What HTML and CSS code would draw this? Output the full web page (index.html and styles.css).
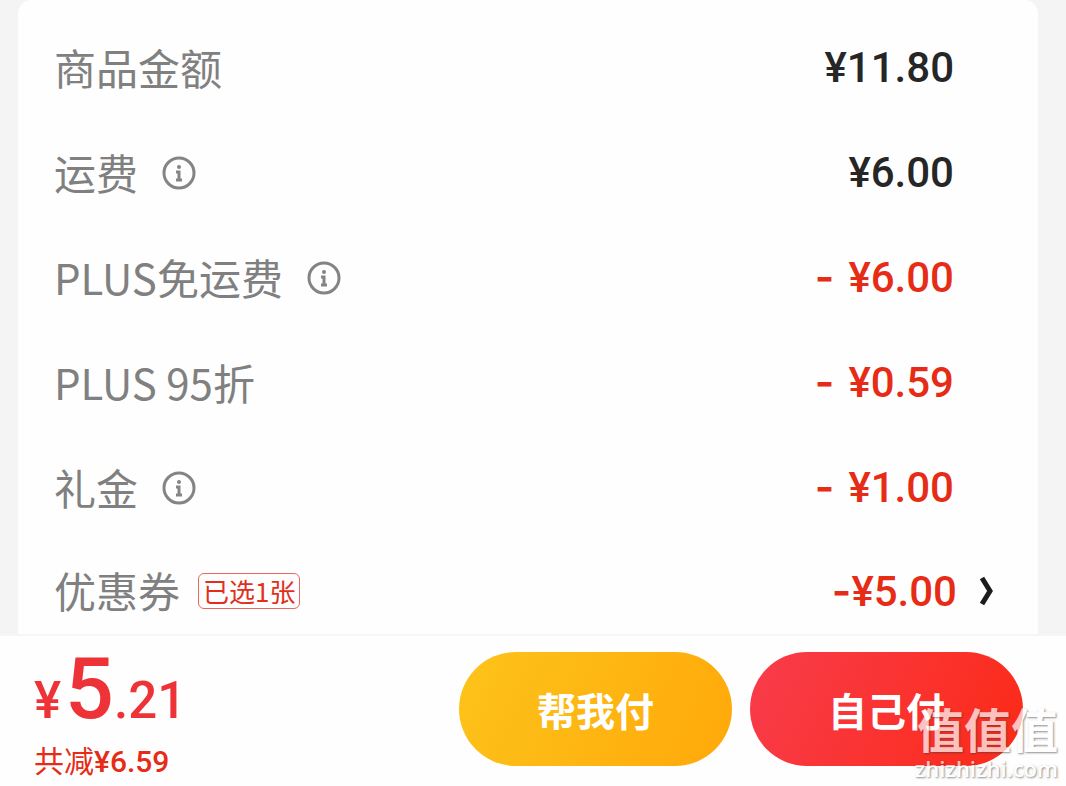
FILE: index.html
```html
<!DOCTYPE html>
<html lang="zh-CN">
<head>
  <meta charset="UTF-8">
  <meta name="viewport" content="width=device-width, initial-scale=1.0">
  <title>确认订单</title>
  <link rel="stylesheet" href="styles.css">
</head>
<body>

<!-- Price details -->
<main class="card">
  <div class="row">
    <span class="label">商品金额</span>
    <span class="amount">¥11.80</span>
  </div>
  <div class="row">
    <span class="label">运费</span>
    <button class="info" aria-label="运费说明">
      <svg viewBox="0 0 34 34"><circle cx="17" cy="17" r="15"/><circle class="dot" cx="17" cy="11" r="2"/><path d="M14 16h3v8M14 24h6"/></svg>
    </button>
    <span class="amount">¥6.00</span>
  </div>
  <div class="row">
    <span class="label">PLUS免运费</span>
    <button class="info" aria-label="PLUS免运费说明">
      <svg viewBox="0 0 34 34"><circle cx="17" cy="17" r="15"/><circle class="dot" cx="17" cy="11" r="2"/><path d="M14 16h3v8M14 24h6"/></svg>
    </button>
    <span class="amount minus"><span class="sign spaced">-</span>¥6.00</span>
  </div>
  <div class="row">
    <span class="label">PLUS 95折</span>
    <span class="amount minus"><span class="sign spaced">-</span>¥0.59</span>
  </div>
  <div class="row">
    <span class="label">礼金</span>
    <button class="info" aria-label="礼金说明">
      <svg viewBox="0 0 34 34"><circle cx="17" cy="17" r="15"/><circle class="dot" cx="17" cy="11" r="2"/><path d="M14 16h3v8M14 24h6"/></svg>
    </button>
    <span class="amount minus"><span class="sign spaced">-</span>¥1.00</span>
  </div>
  <div class="row coupon">
    <span class="label">优惠券</span>
    <span class="tag">已选1张</span>
    <span class="amount minus"><span class="sign">-</span>¥5.00</span>
    <button class="more" aria-label="选择优惠券">
      <svg viewBox="0 0 16 32"><path d="M4 3l8 13-8 13"/></svg>
    </button>
  </div>
</main>

<!-- Bottom pay bar -->
<footer class="pay-bar">
  <div class="total">
    <div class="price"><span class="yen">¥</span><span class="big">5</span>.21</div>
    <div class="saved">共减<span class="saved-num">¥6.59</span></div>
  </div>
  <button class="pay help">帮我付</button>
  <button class="pay self">自己付</button>
  <div class="watermark">
    <span class="mark-name">值值值</span>
    <span class="mark-site">zhizhizhi.com</span>
  </div>
</footer>

</body>
</html>
```

FILE: styles.css
```css
* {
  box-sizing: border-box;
}

body {
  margin: 0;
  background-color: #f4f4f4;
  font-family: "Noto Sans CJK SC", sans-serif;
}

button {
  border: none;
  padding: 0;
  background: none;
  font-family: inherit;
  cursor: pointer;
}

/* Price card */
.card {
  margin: 0 28px 0 18px;
  padding: 15px 84px 0 36px;
  background-color: #fefefe;
  border-radius: 14px 14px 0 0;
}

.row {
  display: flex;
  align-items: center;
  height: 105px;
}

.label {
  font-size: 42px;
  line-height: 56px;
  padding-bottom: 2px;
  color: #808080;
}

.amount {
  margin-left: auto;
  font-family: Roboto, "Noto Sans CJK SC", sans-serif;
  font-size: 42px;
  font-weight: 500;
  line-height: 50px;
  color: #262626;
}

.minus {
  color: #e62c16;
}

.sign {
  font-family: Inter, sans-serif;
  font-weight: 600;
}

.spaced {
  margin-right: 14px;
}

.info {
  width: 34px;
  height: 34px;
  margin-left: 24px;
}

.info svg {
  display: block;
  fill: none;
  stroke: #848484;
  stroke-width: 3;
}

.info .dot {
  fill: #848484;
  stroke: none;
}

/* Coupon row has an arrow past the amounts */
.coupon {
  height: 94px;
  margin-right: -40px;
  padding-top: 8px;
}

.tag {
  margin-left: 18px;
  padding: 0 4px;
  border: 1px solid #e8685c;
  border-radius: 6px;
  font-size: 26px;
  line-height: 34px;
  color: #e0301c;
}

.more {
  width: 16px;
  height: 32px;
  margin-left: 21px;
}

.more svg {
  display: block;
  fill: none;
  stroke: #1c1c1c;
  stroke-width: 5;
}

/* Pay bar */
.pay-bar {
  position: relative;
  display: flex;
  align-items: center;
  gap: 18px;
  height: 152px;
  padding: 0 43px 4px 34px;
  background-color: #fefefe;
  border-top: 2px solid #f6f6f6;
}

.total {
  margin-right: auto;
  padding-top: 6px;
  color: #ee3338;
}

.price {
  font-family: Roboto, sans-serif;
  font-size: 51px;
  font-weight: 500;
  line-height: 84px;
}

.yen {
  margin-right: 4px;
}

.big {
  font-size: 86px;
}

.saved {
  font-size: 30px;
  line-height: 32px;
  color: #e62c16;
}

.saved-num {
  font-family: Roboto, sans-serif;
  font-weight: 500;
}

.pay {
  width: 273px;
  height: 114px;
  border-radius: 57px;
  font-size: 39px;
  font-weight: bold;
  color: #fff;
}

.help {
  background: linear-gradient(115deg, #fdc41a, #ffa80a);
}

.self {
  background: linear-gradient(115deg, #f83c4c, #fc2a16);
}

/* Site mark over the corner */
.watermark {
  position: absolute;
  right: 8px;
  bottom: 4px;
  display: flex;
  flex-direction: column;
  align-items: flex-end;
  color: #fff;
  opacity: 0.7;
  text-shadow: 1px 1px 2px rgba(60, 60, 60, 0.8);
  pointer-events: none;
}

.mark-name {
  font-size: 47px;
  font-weight: bold;
  line-height: 52px;
}

.mark-site {
  font-family: "Open Sans", sans-serif;
  font-size: 22px;
  font-weight: 600;
  line-height: 28px;
}
```
